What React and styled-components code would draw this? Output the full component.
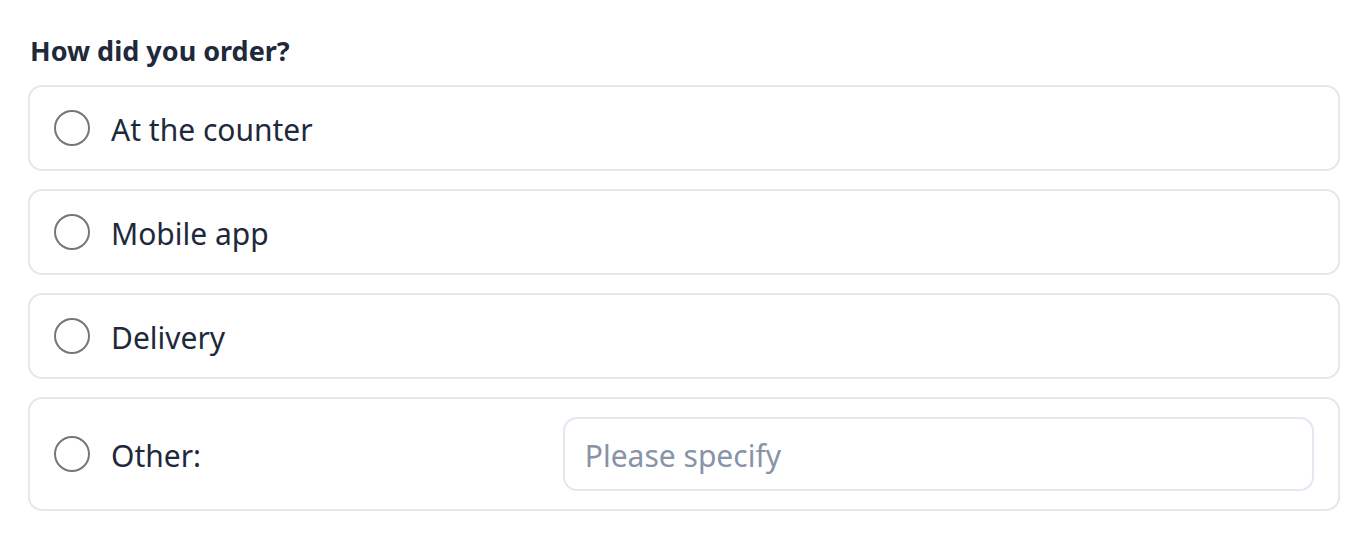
import React from 'react';
import styled, { createGlobalStyle } from 'styled-components';

const GlobalStyle = createGlobalStyle`
  html, body { margin: 0; padding: 0; background: #ffffff; }
  body { font-family: "Noto Sans", "Open Sans", "Liberation Sans", sans-serif; color: #1e293b; }
  * { box-sizing: border-box; }
`;

const opciones = [
  { id: 'counter', label: 'At the counter' },
  { id: 'app', label: 'Mobile app' },
  { id: 'delivery', label: 'Delivery' },
];

export default function App() {
  return (
    <>
      <GlobalStyle />
      <Pagina>
        <Pregunta>How did you order?</Pregunta>
        <Lista role="radiogroup">
          {opciones.map(op => (
            <Tarjeta key={op.id}>
              <Radio type="radio" name="order" value={op.id} />
              <Etiqueta>{op.label}</Etiqueta>
            </Tarjeta>
          ))}
          <Tarjeta $otro>
            <OtroGrupo>
              <Radio type="radio" name="order" value="other" />
              <Etiqueta>Other:</Etiqueta>
            </OtroGrupo>
            <Campo type="text" placeholder="Please specify" />
          </Tarjeta>
        </Lista>
      </Pagina>
    </>
  );
}

const Pagina = styled.div`
  padding: 29px 28px 28px 28px;
`;

const Pregunta = styled.h2`
  margin: 0 0 14px 2px;
  padding-top: 2px;
  font-size: 27px;
  line-height: 40px;
  font-weight: 700;
  color: #1e293b;
`;

const Lista = styled.div`
  display: flex;
  flex-direction: column;
  gap: 18px;
`;

const Tarjeta = styled.label`
  display: ${p => (p.$otro ? 'grid' : 'flex')};
  grid-template-columns: 2fr 3fr;
  align-items: center;
  gap: ${p => (p.$otro ? '8px' : '21px')};
  padding: ${p => (p.$otro ? '18px 24px 18px 24px' : '23px 24px')};
  border: 2px solid #e2e8f0;
  border-radius: 14px;
  background: #fff;
  cursor: pointer;
`;

const OtroGrupo = styled.span`
  display: flex;
  align-items: center;
  gap: 21px;
`;

const Radio = styled.input`
  appearance: none;
  flex: 0 0 auto;
  width: 36px;
  height: 36px;
  margin: 0;
  border: 2px solid #767676;
  border-radius: 50%;
  background: #fff;
  cursor: pointer;
  &:checked { border: 11px solid #1e6fd9; }
`;

const Etiqueta = styled.span`
  padding-top: 4px;
  font-size: 30px;
  line-height: 32px;
  color: #1e293b;
`;

const Campo = styled.input`
  width: 100%;
  height: 74px;
  padding: 2px 20px 0;
  border: 2px solid #e2e8f0;
  border-radius: 14px;
  font-family: inherit;
  font-size: 30px;
  color: #1e293b;
  outline: none;
  &::placeholder { color: #8793a7; }
`;
